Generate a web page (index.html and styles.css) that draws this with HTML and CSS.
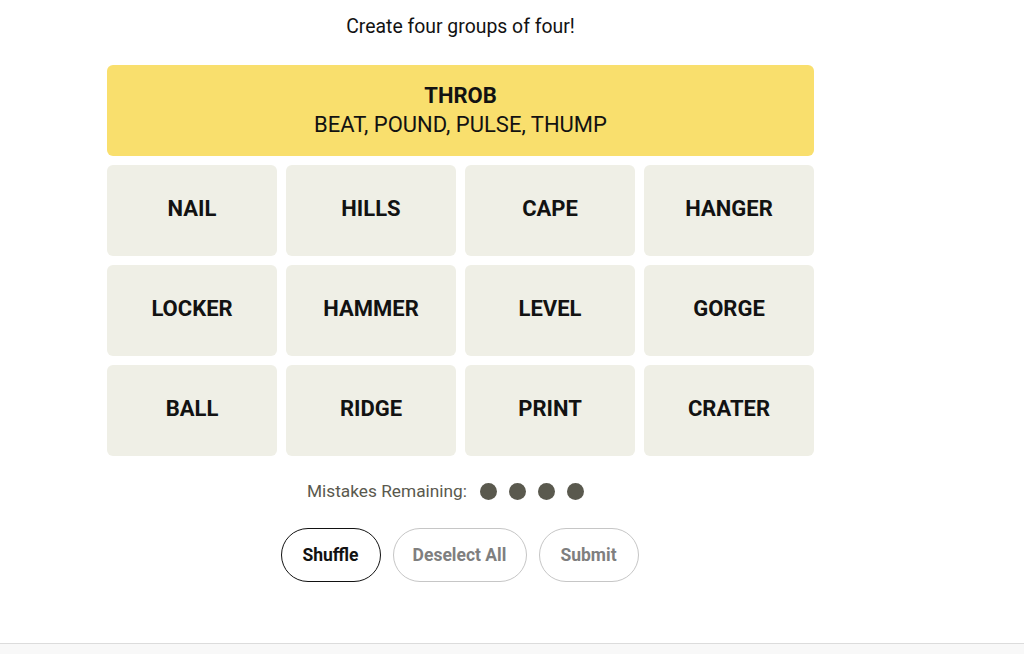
FILE: index.html
```html
<!DOCTYPE html>
<html lang="en">
<head>
<meta charset="utf-8">
<title>Connections</title>
<link rel="stylesheet" href="styles.css">
</head>
<body>
<main class="main">
  <div class="game">
    <p class="prompt">Create four groups of four!</p>
    <div class="board">
      <div class="solved">
        <div class="solved-title">THROB</div>
        <div class="solved-words">BEAT, POUND, PULSE, THUMP</div>
      </div>
      <div class="grid">
        <div class="tile">NAIL</div>
        <div class="tile">HILLS</div>
        <div class="tile">CAPE</div>
        <div class="tile">HANGER</div>
        <div class="tile">LOCKER</div>
        <div class="tile">HAMMER</div>
        <div class="tile">LEVEL</div>
        <div class="tile">GORGE</div>
        <div class="tile">BALL</div>
        <div class="tile">RIDGE</div>
        <div class="tile">PRINT</div>
        <div class="tile">CRATER</div>
      </div>
    </div>
    <div class="mistakes">
      <span class="mistakes-label">Mistakes Remaining:</span>
      <span class="dots"><span class="dot"></span><span class="dot"></span><span class="dot"></span><span class="dot"></span></span>
    </div>
    <div class="actions">
      <button class="btn btn-active">Shuffle</button>
      <button class="btn btn-deselect">Deselect All</button>
      <button class="btn">Submit</button>
    </div>
  </div>
</main>
<footer class="footer"></footer>
</body>
</html>
```

FILE: styles.css
```css
* { box-sizing: border-box; }
html, body { margin: 0; padding: 0; background: #fff; }
body {
  font-family: Roboto, "Liberation Sans", sans-serif;
  color: #121212;
}
.main {
  height: 643px;
}
.game {
  width: 707px;
  margin-left: 107px;
  display: flex;
  flex-direction: column;
  align-items: center;
}
.prompt {
  margin: 15px 0 0;
  font-size: 19.4px;
  line-height: 24px;
  font-weight: 400;
}
.board {
  margin-top: 26px;
  width: 707px;
  display: flex;
  flex-direction: column;
  gap: 9px;
}
.solved {
  height: 91px;
  background: #f9df6d;
  border-radius: 6px;
  display: flex;
  flex-direction: column;
  align-items: center;
  justify-content: center;
}
.solved-title {
  font-size: 22px;
  font-weight: 700;
  line-height: 28px;
}
.solved-words {
  font-size: 22px;
  font-weight: 400;
  line-height: 30px;
}
.grid {
  display: grid;
  grid-template-columns: repeat(4, 170px);
  grid-auto-rows: 91px;
  gap: 9px;
}
.tile {
  background: #efefe6;
  border-radius: 6px;
  display: flex;
  align-items: center;
  justify-content: center;
  font-size: 22px;
  font-weight: 700;
  text-transform: uppercase;
  padding-bottom: 4px;
}
.mistakes {
  margin-top: 25px;
  height: 20px;
  display: flex;
  align-items: center;
  gap: 13px;
  color: #5a594e;
  font-size: 17.3px;
  padding-right: 30px;
}
.dots {
  display: flex;
  gap: 12px;
}
.dot {
  width: 17px;
  height: 17px;
  border-radius: 50%;
  background: #5a594e;
}
.actions {
  margin-top: 27px;
  display: flex;
  gap: 12px;
  padding-right: 2px;
}
.btn {
  height: 54px;
  width: 100px;
  border-radius: 32px;
  border: 1px solid #c6c6c6;
  background: #fff;
  color: #7f7f7f;
  font-family: Roboto, "Liberation Sans", sans-serif;
  font-size: 17.5px;
  font-weight: 700;
  padding: 0;
}
.btn-deselect { width: 134px; }
.btn-active {
  border-color: #121212;
  color: #121212;
}
.footer {
  height: 11px;
  border-top: 1px solid #dcdcdc;
  background: #f8f8f8;
}
```
